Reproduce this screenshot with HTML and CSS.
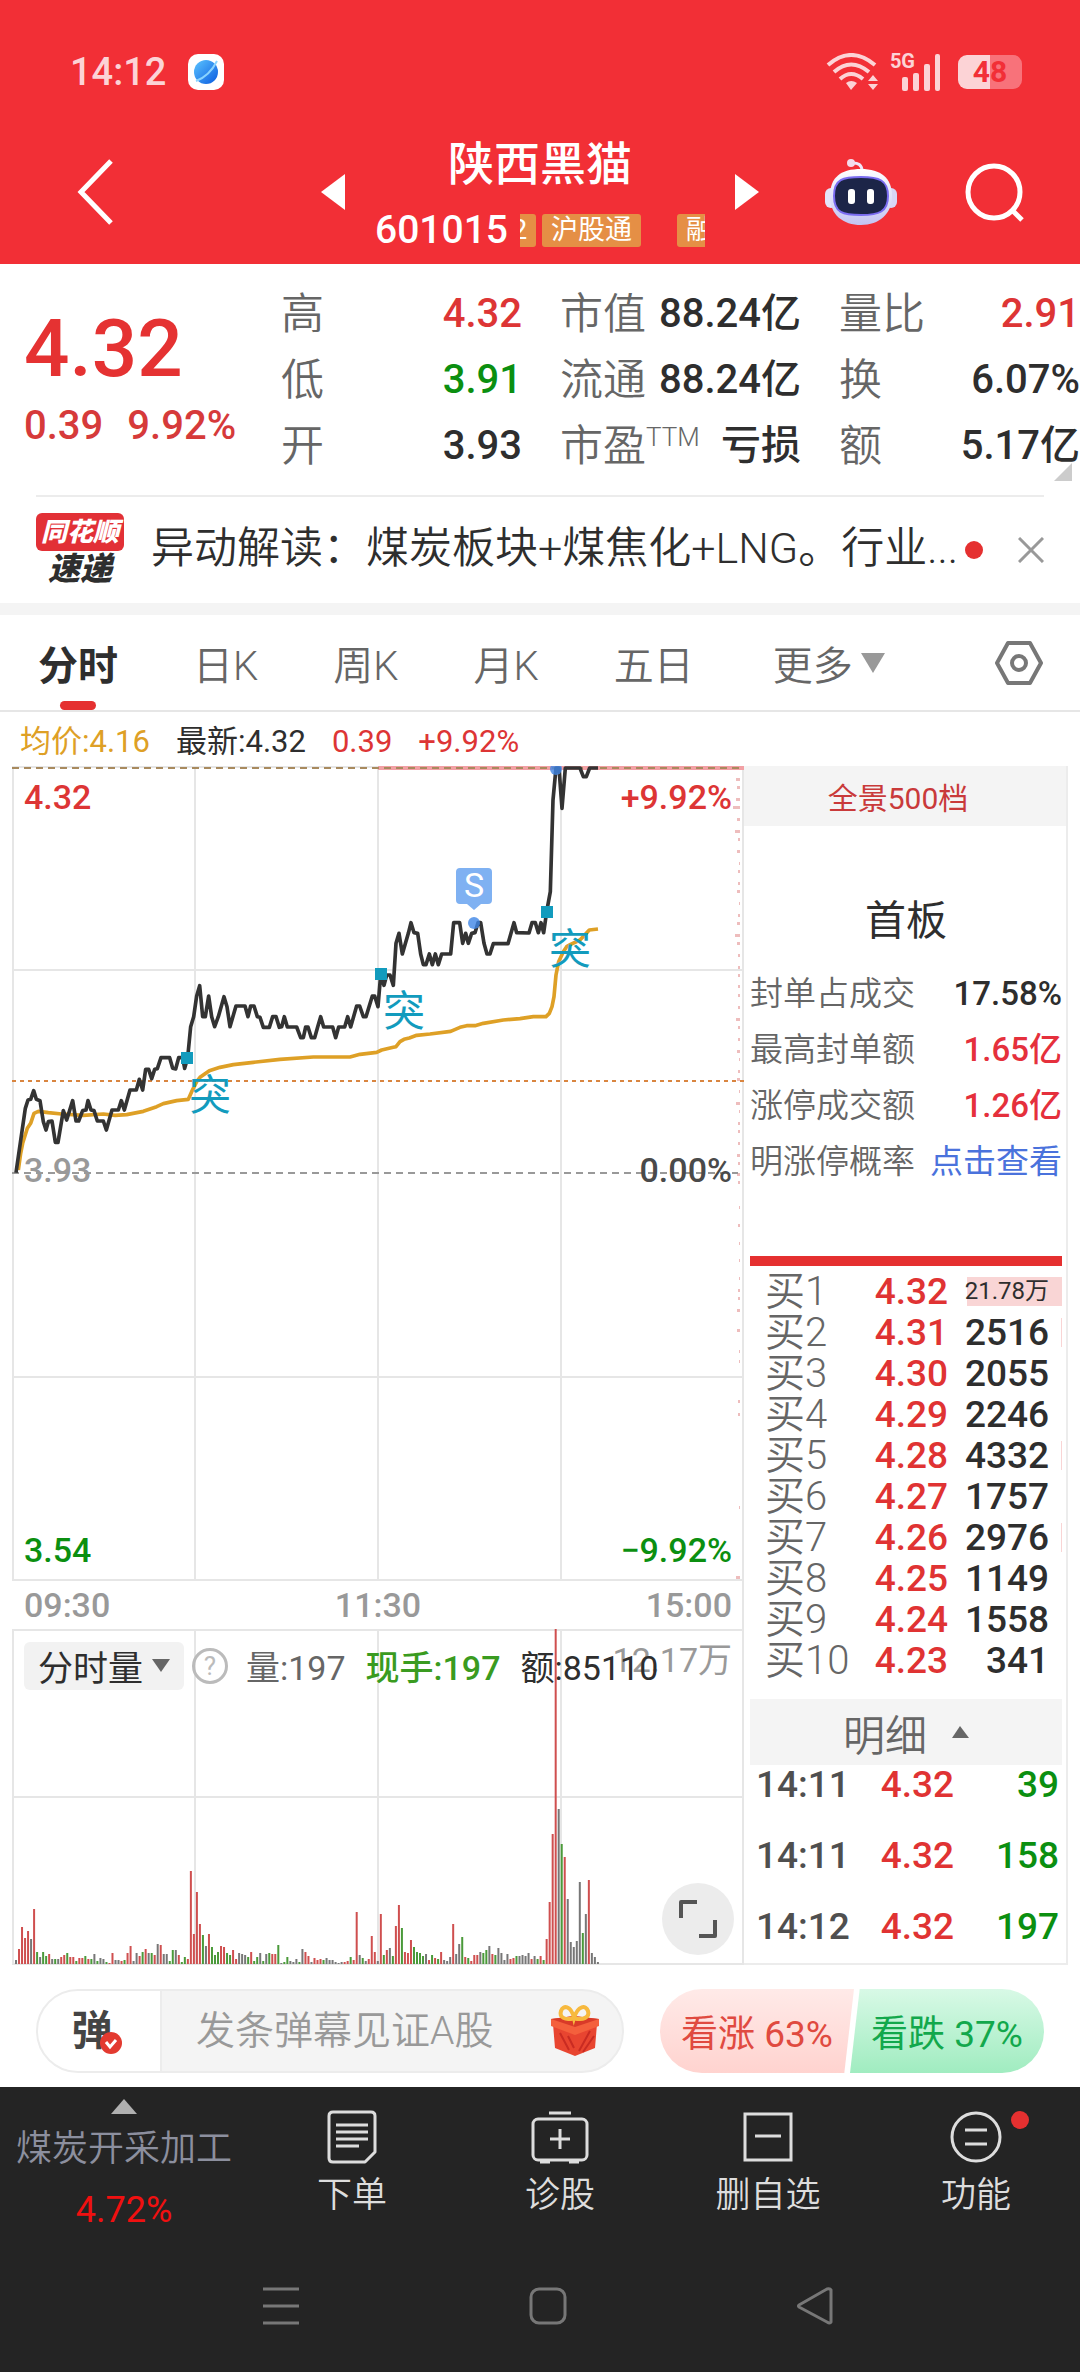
FILE: index.html
```html
<!DOCTYPE html>
<html lang="zh-CN">
<head>
<meta charset="utf-8">
<meta name="viewport" content="width=device-width, initial-scale=1">
<title>陕西黑猫 601015</title>
<link rel="stylesheet" href="styles.css">
</head>
<body>
<header class="top">
  <div class="status">
    <span class="clock">14:12</span>
    <svg class="status-app" width="36" height="36" viewBox="0 0 36 36"><defs><linearGradient id="app" x1="0" y1="0" x2="1" y2="1"><stop offset="0" stop-color="#5cc4ff"/><stop offset="1" stop-color="#0a5be0"/></linearGradient></defs><rect width="36" height="36" rx="10" fill="#fff"/><circle cx="18" cy="18" r="12" fill="url(#app)"/><path d="M8 27c8-3 16-10 21-20" stroke="#8ad4ff" stroke-width="2" fill="none"/></svg>
    <span class="spacer"></span>
    <svg width="52" height="38" viewBox="0 0 52 38" fill="none" stroke="#fcd3d6" stroke-width="4"><path d="M2 12Q25-8 49 12M8 19Q25 4 43 19M14 26Q25 16 37 26"/><path d="M20 30q5-4 11 0l-6 7z" fill="#fcd3d6" stroke="none"/><path d="M42 28l5-6 5 6zM42 31h10l-5 6z" fill="#fcd3d6" stroke="none"/></svg>
    <div class="signal"><span class="net">5G</span><svg width="40" height="38" viewBox="0 0 40 38" fill="#fcd3d6"><rect x="1" y="24" width="6" height="14" rx="2"/><rect x="12" y="20" width="6" height="18" rx="2"/><rect x="23" y="11" width="6" height="27" rx="2"/><rect x="34" y="1" width="5" height="37" rx="2"/></svg></div>
    <span class="battery">48</span>
  </div>
  <nav class="titlebar">
    <div class="side"><button class="icon-btn" aria-label="返回"><svg width="36" height="66" viewBox="0 0 36 66" fill="none" stroke="#fff" stroke-width="5"><path d="M34 2L4 33l30 31"/></svg></button></div>
    <button class="icon-btn" aria-label="上一只"><svg width="24" height="36" viewBox="0 0 24 36"><path d="M24 0v36L0 18z" fill="#fff"/></svg></button>
    <div class="stock">
      <h1>陕西黑猫</h1>
      <div class="stock-sub"><span class="code">601015</span><div class="tags"><span>2</span><span>沪股通</span><span class="far">融</span></div></div>
    </div>
    <button class="icon-btn" aria-label="下一只"><svg width="24" height="36" viewBox="0 0 24 36"><path d="M0 0v36l24-18z" fill="#fff"/></svg></button>
    <div class="side end">
      <button class="icon-btn" aria-label="智能助手"><svg width="72" height="68" viewBox="0 0 72 68"><defs><linearGradient id="bot" x1="0" y1="0" x2="0" y2="1"><stop offset="0" stop-color="#fff"/><stop offset="1" stop-color="#c3c4f2"/></linearGradient></defs><path d="M26 5q11-1 11 8" fill="none" stroke="#f0e8fb" stroke-width="3"/><circle cx="26" cy="5" r="4" fill="#f4dcec"/><rect x="0" y="30" width="12" height="20" rx="6" fill="#e4e4fa"/><rect x="60" y="30" width="12" height="20" rx="6" fill="#d8d6f6"/><path d="M36 11C56 11 67 20 67 38S54 67 36 67 5 57 5 38s11-27 31-27z" fill="url(#bot)"/><path d="M36 19c18 0 27 3 27 19s-9 19-27 19S9 55 9 38s9-19 27-19z" fill="#1c2548" stroke="#7a6cf0" stroke-width="2"/><rect x="23" y="31" width="7" height="15" rx="3" fill="#fff"/><rect x="42" y="31" width="7" height="15" rx="3" fill="#fff"/></svg></button>
      <button class="icon-btn" aria-label="搜索"><svg width="60" height="60" viewBox="0 0 60 60" fill="none" stroke="#fff" stroke-width="5"><circle cx="29" cy="30" r="26"/><path d="M47 48l10 10"/></svg></button>
    </div>
  </nav>
</header>

<main>
<section class="quote">
  <div class="price"><strong>4.32</strong><p><span>0.39</span><span>9.92%</span></p></div>
  <dl class="facts">
    <div><dt>高</dt><dd class="up">4.32</dd></div>
    <div><dt>市值</dt><dd>88.24亿</dd></div>
    <div><dt>量比</dt><dd class="up">2.91</dd></div>
    <div><dt>低</dt><dd class="down">3.91</dd></div>
    <div><dt>流通</dt><dd>88.24亿</dd></div>
    <div><dt>换</dt><dd>6.07%</dd></div>
    <div><dt>开</dt><dd>3.93</dd></div>
    <div><dt>市盈<sup>TTM</sup></dt><dd>亏损</dd></div>
    <div><dt>额</dt><dd>5.17亿</dd></div>
  </dl>
  <i class="corner"></i>
</section>

<section class="news">
  <div class="news-logo"><b>同花顺</b><em>速递</em></div>
  <a href="#news">异动解读：煤炭板块+煤焦化+LNG。行业...</a>
  <i class="dot"></i>
  <button class="icon-btn" aria-label="关闭"><svg width="26" height="26" viewBox="0 0 26 26" stroke="#999" stroke-width="3"><path d="M1 1l24 24M25 1L1 25"/></svg></button>
</section>

<nav class="tabs">
  <button class="active">分时</button><button>日K</button><button>周K</button><button>月K</button><button>五日</button>
  <button class="more">更多<svg width="24" height="20" viewBox="0 0 24 20"><path d="M0 0h24L12 20z" fill="#999"/></svg></button>
  <button class="icon-btn settings" aria-label="设置"><svg width="50" height="46" viewBox="0 0 50 46" fill="none" stroke="#777" stroke-width="4" stroke-linejoin="round"><path d="M14 3h22l11 20-11 20H14L3 23z"/><circle cx="25" cy="23" r="7"/></svg></button>
</nav>

<p class="legend"><span class="avg">均价:4.16</span><span>最新:4.32</span><span class="up">0.39</span><span class="up">+9.92%</span></p>

<section class="board">
  <div class="charts">
    <div class="plot">
      <svg viewBox="0 0 732 816" id="price-chart">
        <g stroke="#e6e6e6" stroke-width="2" fill="none"><path d="M1 0V815M183 0V815M366 0V815M549 0V815M0 1H732M0 204H732M0 611H732M0 814H732"/></g>
        <g id="ticks" fill="#eebdbd"></g>
        <path d="M366 2H732" stroke="#f2a0a4" stroke-width="4"/>
        <path d="M0 2H732" stroke="#a88a5e" stroke-width="2" stroke-dasharray="7 5"/>
        <path d="M0 315H732" stroke="#d98540" stroke-width="2" stroke-dasharray="4 4"/>
        <path d="M0 407H726" stroke="#999" stroke-width="2" stroke-dasharray="7 5"/>
        <g transform="translate(-12 -6) scale(.33333)" fill="none" stroke-width="11" stroke-linejoin="round">
          <polyline id="avg-line" stroke="#dea026"/>
          <polyline id="price-line" stroke="#333"/>
        </g>
        <g fill="#129bbd"><rect x="169" y="286" width="12" height="12"/><rect x="363" y="202" width="12" height="12"/><rect x="529" y="140" width="12" height="12"/></g>
        <g class="mark"><text x="177" y="344">突</text><text x="371" y="260">突</text><text x="537" y="198">突</text></g>
        <g fill="#3f86e6"><circle cx="462" cy="157" r="6" opacity=".8"/><circle cx="544" cy="3" r="6" opacity=".8"/></g>
        <path d="M448 102h28q4 0 4 4v28q0 4-4 4h-7l-7 6-7-6h-7q-4 0-4-4v-28q0-4 4-4z" fill="#7fb1f2"/>
        <text class="sell" x="462" y="131">S</text>
      </svg>
      <span class="lbl tl up">4.32</span><span class="lbl tr up">+9.92%</span>
      <span class="lbl ml">3.93</span><span class="lbl mr">0.00%</span>
      <span class="lbl bl down">3.54</span><span class="lbl br down">−9.92%</span>
    </div>
    <div class="times"><span>09:30</span><span>11:30</span><span>15:00</span></div>
    <div class="plot">
      <svg viewBox="0 0 732 336">
        <g stroke="#e6e6e6" stroke-width="2" fill="none"><path d="M1 0V335M183 0V335M366 0V335M549 0V335M0 1H732M0 168H732M0 335H732"/></g>
        <g id="volume"></g>
      </svg>
      <span class="lbl vmax">12.17万</span>
      <div class="vol-head">
        <button class="chip">分时量<svg width="18" height="13" viewBox="0 0 18 13"><path d="M0 0h18l-9 13z" fill="#666"/></svg></button>
        <span class="help">?</span>
        <span class="grey">量:197</span><span class="now">现手:197</span><span>额:85110</span>
      </div>
      <button class="full" aria-label="全屏"><svg width="38" height="38" viewBox="0 0 38 38" fill="none" stroke="#555" stroke-width="4" stroke-linejoin="round"><path d="M2 18V2h16M36 20v16H20"/></svg></button>
    </div>
  </div>

  <aside class="depth">
    <button class="full-depth">全景500档</button>
    <div class="limit">
      <h2>首板</h2>
      <dl>
        <div><dt>封单占成交</dt><dd>17.58%</dd></div>
        <div><dt>最高封单额</dt><dd class="hot">1.65亿</dd></div>
        <div><dt>涨停成交额</dt><dd class="hot">1.26亿</dd></div>
        <div><dt>明涨停概率</dt><dd><a href="#rate">点击查看</a></dd></div>
      </dl>
    </div>
    <table class="bids">
      <tr><th>买1</th><td>4.32</td><td class="big">21.78万</td></tr>
      <tr><th>买2</th><td>4.31</td><td class="sliver">2516</td></tr>
      <tr><th>买3</th><td>4.30</td><td>2055</td></tr>
      <tr><th>买4</th><td>4.29</td><td>2246</td></tr>
      <tr><th>买5</th><td>4.28</td><td class="sliver">4332</td></tr>
      <tr><th>买6</th><td>4.27</td><td>1757</td></tr>
      <tr><th>买7</th><td>4.26</td><td class="sliver">2976</td></tr>
      <tr><th>买8</th><td>4.25</td><td>1149</td></tr>
      <tr><th>买9</th><td>4.24</td><td>1558</td></tr>
      <tr><th>买10</th><td>4.23</td><td>341</td></tr>
    </table>
    <button class="detail">明细<svg width="17" height="12" viewBox="0 0 17 12"><path d="M0 12h17L8 0z" fill="#666"/></svg></button>
    <table class="deals">
      <tr><th>14:11</th><td>4.32</td><td>39</td></tr>
      <tr><th>14:11</th><td>4.32</td><td>158</td></tr>
      <tr><th>14:12</th><td>4.32</td><td>197</td></tr>
    </table>
  </aside>
</section>

<section class="chat">
  <div class="composer">
    <button class="danmu" aria-label="弹幕开关">弹<svg width="22" height="22" viewBox="0 0 22 22"><circle cx="11" cy="11" r="11" fill="#e33a30"/><path d="M6 10l4 5 6-7" fill="none" stroke="#fff" stroke-width="3"/></svg></button>
    <input type="text" placeholder="发条弹幕见证A股" aria-label="发条弹幕">
    <svg class="gift" width="50" height="54" viewBox="0 0 50 54"><path d="M3 20l22 10v22L5 44zM47 20L25 30v22l20-8z" fill="#e84530"/><path d="M1 15l23-3 25 3v7L25 31 1 22z" fill="#f4603c"/><path d="M1 15l23-3 25 3-24 8z" fill="#d93a28"/><path d="M10 29l9 17M18 32l6 12M40 27L29 47M44 32L33 48" stroke="#c92b22" stroke-width="2"/><path d="M24 14C15 17 9 13 11 7s10-6 13 7c4-13 12-13 14-7s-5 10-14 7z" fill="none" stroke="#f7b93e" stroke-width="4"/></svg>
  </div>
  <div class="poll"><button class="bull">看涨 63%</button><button class="bear">看跌 37%</button></div>
</section>
</main>

<footer class="bottom">
  <div class="menu">
    <a href="#sector" class="sector"><svg width="26" height="15" viewBox="0 0 26 15"><path d="M0 15h26L13 0z" fill="#b0b0b0"/></svg><span>煤炭开采加工</span><b>4.72%</b></a>
    <a href="#order"><svg width="54" height="54" viewBox="0 0 54 54" fill="none" stroke="#ddd" stroke-width="3"><path d="M8 2h38q4 0 4 4v36l-10 10H8q-4 0-4-4V6q0-4 4-4z" stroke-linejoin="round"/><path d="M11 15h32M11 22h32M11 29h32M11 36h23"/></svg><span>下单</span></a>
    <a href="#diagnose"><svg width="58" height="54" viewBox="0 0 58 54" fill="none" stroke="#ddd" stroke-width="3"><rect x="2" y="9" width="54" height="41" rx="5"/><path d="M18 3h22M9 52h10M38 52h10M29 19v20M19 29h20"/></svg><span>诊股</span></a>
    <a href="#remove"><svg width="54" height="54" viewBox="0 0 54 54" fill="none" stroke="#ddd" stroke-width="3"><rect x="4" y="4" width="46" height="46"/><path d="M14 26h26"/></svg><span>删自选</span></a>
    <a href="#more" class="has-dot"><svg width="54" height="54" viewBox="0 0 54 54" fill="none" stroke="#ddd" stroke-width="3"><circle cx="27" cy="27" r="24"/><path d="M16 20h22M16 34h22"/></svg><span>功能</span></a>
  </div>
  <div class="sysnav">
    <button class="icon-btn" aria-label="最近任务"><svg width="36" height="38" viewBox="0 0 36 38" stroke="#777" stroke-width="3"><path d="M0 2h36M0 19h36M0 36h36"/></svg></button>
    <button class="icon-btn" aria-label="主屏幕"><svg width="38" height="38" viewBox="0 0 38 38" fill="none" stroke="#777" stroke-width="3"><rect x="2" y="2" width="34" height="34" rx="8"/></svg></button>
    <button class="icon-btn" aria-label="后退"><svg width="38" height="38" viewBox="0 0 38 38" fill="none" stroke="#777" stroke-width="3" stroke-linejoin="round"><path d="M35 3v32q-1 2-4 0L3 20q-1-1 0-2L31 2q3-1 4 1z"/></svg></button>
  </div>
</footer>
<script src="script.js"></script>
</body>
</html>
```
FILE: styles.css
```css
* { box-sizing: border-box; }
body {
  margin: 0;
  background: #fff;
  color: #2e2e2e;
  font-family: Roboto, "Noto Sans CJK SC", sans-serif;
  font-size: 34px;
}
h1, h2, p, dl, dd { margin: 0; }
button {
  padding: 0;
  border: 0;
  background: none;
  color: inherit;
  font: inherit;
}
a { color: inherit; text-decoration: none; }
svg { display: block; flex: none; }
table { border-collapse: collapse; }
th, td { padding: 0; }
.icon-btn { flex: none; }
.up { color: #dd3535; }
.down { color: #0b8f10; }
.spacer { flex: 1; }

/* header */
.top { background: #f22f36; color: #fff; }
.status {
  display: flex;
  align-items: center;
  height: 132px;
  padding: 12px 58px 0 70px;
}
.clock { font-size: 38px; font-weight: 500; color: #fcd3d6; }
.status-app { margin-left: 22px; }
.signal { display: flex; align-items: flex-start; margin: 0 17px 0 12px; }
.net { margin-right: -14px; font-size: 20px; line-height: 16px; font-weight: 700; color: #fcd3d6; }
.battery {
  width: 64px;
  height: 34px;
  border-radius: 9px;
  background: linear-gradient(90deg, #fcd3d6 50%, #f8727a 50%);
  color: #f22f36;
  font-size: 30px;
  font-weight: 700;
  line-height: 34px;
  text-align: center;
}
.titlebar {
  display: flex;
  align-items: center;
  height: 132px;
  padding: 0 55px 12px 77px;
}
.side { display: flex; flex: 1 1 0; margin-right: -22px; }
.side.end { justify-content: flex-end; gap: 68px; margin: 0; }
.stock { width: 390px; padding-top: 6px; text-align: center; }
.stock h1 { font-size: 46px; font-weight: 500; line-height: 64px; }
.stock-sub { display: flex; align-items: center; gap: 12px; height: 56px; margin-top: 6px; padding: 0 30px; }
.code { font-size: 39px; font-weight: 500; }
.tags {
  display: flex;
  justify-content: center;
  flex: 1;
  gap: 6px;
  min-width: 0;
  overflow: hidden;
}
.tags span {
  flex: none;
  padding: 0 9px;
  border-radius: 3px;
  background: #e58f45;
  font-size: 27px;
  line-height: 33px;
}
.tags .far { margin-left: 30px; }

/* quote */
.quote {
  position: relative;
  display: flex;
  height: 231px;
  padding-top: 17px;
}
.price { width: 281px; padding: 22px 0 0 24px; color: #e53232; }
.price strong { display: block; font-size: 80px; font-weight: 500; line-height: 92px; }
.price p { display: flex; gap: 24px; font-size: 40px; line-height: 62px; color: #d63a3a; font-weight: 500; }
.facts {
  display: grid;
  flex: 1;
  grid-template-columns: repeat(3, 1fr);
  column-gap: 38px;
  height: 198px;
}
.facts div { display: flex; justify-content: space-between; align-items: center; white-space: nowrap; line-height: 66px; }
.facts dt { font-size: 43px; color: #666; font-weight: 350; }
.facts dd { font-size: 40px; font-weight: 500; }
.facts sup { font-size: 26px; line-height: 0; }
.corner {
  position: absolute;
  right: 8px;
  bottom: 14px;
  border-left: 18px solid transparent;
  border-bottom: 18px solid #ccc;
}

/* news */
.news {
  display: flex;
  align-items: center;
  height: 108px;
  margin: 0 36px;
  border-top: 2px solid #ececec;
}
.news a { flex: 1; margin-left: 27px; font-size: 43px; line-height: 60px; white-space: nowrap; font-weight: 350; padding-bottom: 4px; }
.news-logo { width: 88px; text-align: center; font-style: italic; font-weight: 900; }
.news-logo b {
  display: block;
  border-radius: 6px;
  background: #e23036;
  color: #fff;
  font-size: 26px;
  font-weight: 900;
  line-height: 38px;
}
.news-logo em { display: block; font-size: 32px; line-height: 36px; }
.dot { width: 18px; height: 18px; margin: 0 35px 0 6px; border-radius: 50%; background: #e53030; }

/* tabs */
.tabs {
  display: flex;
  gap: 75px;
  align-items: center;
  height: 109px;
  padding: 0 36px 0 38px;
  border-top: 12px solid #f4f4f4;
  border-bottom: 2px solid #e6e6e6;
  color: #666;
  font-size: 40px;
}
.tabs button { position: relative; height: 94px; white-space: nowrap; font-weight: 350; }
.tabs .active { color: #2e2e2e; font-weight: 700; }
.active::after {
  content: "";
  position: absolute;
  left: 50%;
  bottom: 0;
  width: 36px;
  height: 9px;
  margin-left: -18px;
  border-radius: 5px;
  background: #e53030;
}
.tabs .more { display: flex; align-items: center; gap: 8px; margin-left: 4px; }
.tabs .settings { margin-left: auto; }
.legend {
  display: flex;
  gap: 26px;
  height: 54px;
  padding: 0 20px;
  font-size: 31px;
  line-height: 60px;
}
.legend .avg { color: #dea026; }

/* chart board */
.board {
  display: grid;
  grid-template-columns: 732fr 324fr;
  padding: 0 12px;
}
.charts { box-shadow: inset -2px 0 #e6e6e6; }
.plot { position: relative; }
.plot > svg { width: 100%; height: auto; }
.mark text { fill: #129bbd; font-size: 42px; }
.sell { fill: #fff; font-size: 34px; text-anchor: middle; }
.lbl { position: absolute; line-height: 40px; font-weight: 500; }
.tl, .ml, .bl { left: 12px; }
.tr, .mr, .br, .vmax { right: 12px; }
.tl, .tr { top: 11px; }
.ml, .mr { top: 47%; }
.bl, .br { bottom: 12px; }
.ml, .vmax { color: #999; }
.mr { color: #4a4a4a; }
.vmax { top: 11px; font-weight: 400; }
.times { display: flex; justify-content: space-between; padding: 0 12px; line-height: 47px; color: #999; font-weight: 500; }
.vol-head {
  position: absolute;
  top: 12px;
  left: 12px;
  display: flex;
  align-items: center;
  white-space: nowrap;
}
.vol-head > * { margin-right: 20px; }
.vol-head .chip {
  display: flex;
  align-items: center;
  gap: 9px;
  height: 48px;
  margin-right: 8px;
  padding: 0 14px;
  border-radius: 6px;
  background: #f2f2f2;
  font-size: 35px;
}
.vol-head .help {
  width: 36px;
  height: 36px;
  margin-right: 18px;
  border: 3px solid #bbb;
  border-radius: 50%;
  color: #bbb;
  font-size: 26px;
  line-height: 30px;
  text-align: center;
}
.grey { color: #666; }
.now { color: #3a9b20; font-weight: 500; }
.full {
  position: absolute;
  right: 10px;
  bottom: 10px;
  display: grid;
  place-items: center;
  width: 72px;
  height: 72px;
  border-radius: 50%;
  background: #ececec;
}

/* order depth */
.depth {
  display: flex;
  flex-direction: column;
  padding: 0 4px 0 6px;
  border-right: 2px solid #ececec;
  border-bottom: 2px solid #ececec;
}
.full-depth { height: 60px; margin: 0 -4px 0 -6px; padding-right: 14px; background: #f4f4f4; color: #c93a3a; font-size: 30px; }
.limit { height: 440px; border-bottom: 10px solid #e53030; }
.limit h2 { padding-top: 60px; font-size: 41px; font-weight: 400; line-height: 70px; text-align: center; }
.limit dl { padding-top: 10px; }
.limit dl div { display: flex; justify-content: space-between; line-height: 56px; font-size: 33px; }
.limit dt { color: #666; font-weight: 350; }
.limit dd { font-weight: 500; }
.limit .hot { color: #e5303c; }
.limit a { color: #4a72dc; font-weight: 400; }
.bids { width: 100%; margin: 5px 0 18px; font-size: 37px; }
.bids tr { height: 41px; line-height: 41px; }
.bids th { padding-left: 15px; color: #666; font-weight: 350; font-size: 40px; text-align: left; }
.bids td, .deals td { font-weight: 500; text-align: right; }
.bids td:nth-child(2), .deals td:nth-child(2) { width: 85px; color: #e03333; }
.bids td:last-child { width: 114px; padding-right: 13px; }
.bids .big { background: linear-gradient(#f9d5d5, #f9d5d5) right center / 95px 29px no-repeat; font-size: 24px; font-weight: 400; }
.bids .sliver { background: linear-gradient(#f9d5d5, #f9d5d5) right center / 1px 29px no-repeat; }
.detail {
  display: flex;
  align-items: center;
  justify-content: center;
  gap: 25px;
  height: 66px;
  background: #f4f4f4;
  color: #666;
  font-size: 42px;
  font-weight: 350;
}
.deals { width: 100%; margin-top: -16px; font-size: 37px; }
.deals tr { height: 71px; }
.deals th { padding-left: 6px; color: #4f4f4f; font-weight: 500; text-align: left; }
.deals td:last-child { width: 108px; padding-right: 3px; color: #0b8f10; }

/* chat and poll */
.chat {
  display: grid;
  grid-template-columns: 588fr 384fr;
  gap: 36px;
  padding: 24px 36px 14px;
}
.composer {
  display: flex;
  align-items: center;
  height: 84px;
  overflow: hidden;
  border: 2px solid #ececec;
  border-radius: 42px;
  background: #f4f4f4;
}
.danmu {
  position: relative;
  width: 124px;
  height: 84px;
  border-right: 2px solid #ececec;
  background: #fff;
  color: #444;
  font-size: 41px;
  font-weight: 700;
  padding: 0 14px 8px 0;
}
.danmu svg { position: absolute; left: 62px; bottom: 19px; }
.composer input {
  flex: 1;
  min-width: 0;
  padding: 0 0 0 34px;
  border: 0;
  background: none;
  font: inherit;
  font-size: 39px;
}
.composer input::placeholder { color: #999; font-weight: 350; }
.gift { margin-right: 22px; }
.poll { display: flex; height: 84px; border-radius: 42px; overflow: hidden; font-size: 37px; white-space: nowrap; }
.poll button { flex: 1; }
.bull { margin-right: -2px; background: linear-gradient(#ffeae8, #ffd3cf); clip-path: polygon(0 0, 100% 0, 95% 100%, 0 100%); color: #e04a40; }
.bear { margin-left: -2px; background: linear-gradient(#d8f9e6, #a0ecc0); clip-path: polygon(5% 0, 100% 0, 100% 100%, 0 100%); color: #12a84c; }

/* bottom bar */
.bottom { background: #242424; color: #ddd; }
.menu { display: grid; grid-template-columns: 248fr 208fr 208fr 208fr 208fr; height: 157px; }
.menu a { position: relative; display: flex; flex-direction: column; align-items: center; padding-top: 23px; font-size: 35px; font-weight: 350; line-height: 52px; white-space: nowrap; }
.menu a svg { margin-bottom: 6px; }
.menu .sector { padding-top: 12px; font-size: 36px; color: #8c8f9e; line-height: 61px; }
.menu .sector svg { margin-bottom: 5px; }
.sector b { color: #f01010; font-weight: 400; }
.has-dot::after { content: ""; position: absolute; left: 67%; top: 24px; width: 18px; height: 18px; border-radius: 50%; background: #e53030; }
.sysnav { display: flex; justify-content: space-between; padding: 43px 246px 47px 263px; }
```
FILE: script.js
```js
const price = `48,1238 76,1045 84,1020 92,1018 101,992 109,1018 120,1022 130,1085 138,1110 145,1085 156,1083 166,1147 174,1147 190,1052 200,1080 218,1022 228,1083 236,1083 248,1052 258,1050 264,1022 273,1050 282,1052 292,1083 310,1083 319,1110 336,1050 355,1050 364,1022 373,1050 390,990 409,990 418,958 428,990 437,928 446,928 455,956 464,928 472,926 483,893 509,893 518,925 527,927 536,893 548,893 554,925 563,893 572,800 581,770 590,708 599,677 608,770 616,770 626,708 635,770 644,800 655,770 672,710 681,740 690,800 708,738 735,738 744,770 752,738 762,738 772,770 780,772 790,802 808,802 818,770 828,770 838,802 845,800 853,770 862,801 890,801 902,833 910,833 917,801 924,801 934,833 944,833 953,801 962,770 971,801 998,801 1007,833 1016,801 1034,801 1043,770 1052,801 1070,738 1079,738 1090,770 1098,770 1117,708 1124,708 1134,740 1142,645 1152,676 1160,645 1170,645 1180,676 1188,550 1197,520 1207,582 1225,520 1233,488 1242,518 1253,520 1262,582 1270,614 1278,614 1288,582 1297,614 1306,582 1315,614 1325,582 1352,582 1361,488 1379,488 1388,550 1397,520 1405,550 1415,520 1425,518 1434,488 1442,488 1452,550 1461,582 1470,582 1480,551 1524,551 1533,520 1542,488 1550,518 1587,519 1596,488 1606,488 1615,518 1623,488 1631,518 1640,455 1651,395 1659,120 1668,24 1677,24 1686,145 1696,24 1740,24 1750,50 1759,50 1769,24 1794,24`;
const average = `55,1230 62,1180 68,1150 82,1105 92,1090 102,1060 115,1054 145,1058 185,1062 250,1066 310,1062 345,1066 380,1064 430,1054 470,1040 490,1031 530,1022 565,1018 575,995 590,965 600,952 628,932 660,922 700,914 760,907 840,898 940,891 1050,891 1080,883 1130,877 1145,870 1180,862 1188,860 1200,845 1212,838 1228,834 1250,826 1290,822 1352,814 1380,802 1400,797 1425,797 1450,790 1510,780 1560,776 1600,770 1638,770 1648,760 1656,740 1662,710 1668,645 1676,605 1690,575 1700,560 1712,553 1740,540 1768,510 1794,507`;
document.getElementById("price-line").setAttribute("points", price);
document.getElementById("avg-line").setAttribute("points", average);

// one bar per minute: r rise, g fall, k flat
const volume = "k4 r15 r37 r26 r33 k25 r55 g12 k7 g12 g8 r10 k5 g5 k5 r7 r9 g11 r7 r7 g3 r6 r6 g8 r5 g5 k10 g3 k6 k5 g2 r1 r11 k4 k4 r3 g4 r11 r18 k3 k11 r8 g12 r15 k11 g11 r9 k20 r19 k10 k10 g3 g14 k14 r9 g2 g7 r5 r93 r30 r72 r40 g29 k18 r30 g17 g9 g12 r18 r17 g11 g9 r14 r5 k11 k10 k9 g7 r12 g3 g7 k11 g3 k10 g11 r10 r10 g19 k1 g2 g7 k3 k2 k5 g2 k15 r12 r8 k2 r6 r4 r5 g4 k6 k4 k4 k2 k1 k2 r2 r3 g7 r4 r52 k9 g6 k3 r5 r28 r12 k3 r50 g9 r14 k16 g8 r38 r59 g36 r12 r11 r24 g17 g12 g11 g8 k10 r4 g9 r6 g5 r12 k4 k3 k7 r40 k10 k20 g27 r7 g6 r3 r9 r9 k12 g11 g14 k18 r10 g9 k16 k11 k4 k10 r5 r6 g8 k8 k9 k8 k11 r5 k8 g5 r8 g4 r25 r62 r130 r336 k155 g120 r107 k65 k22 k17 k23 k82 g31 k50 r84 k11 k7 k2";
const colors = { r: "#cf4f4f", g: "#4a9a3a", k: "#777" };
const svgNS = "http://www.w3.org/2000/svg";
function bar(parent, x, y, width, height, fill) {
  const rect = document.createElementNS(svgNS, "rect");
  Object.entries({ x, y, width, height }).forEach(([k, v]) => rect.setAttribute(k, v));
  if (fill) rect.setAttribute("fill", fill);
  parent.appendChild(rect);
}
const volumeGroup = document.getElementById("volume");
volume.split(" ").forEach((item, i) => {
  const height = Number(item.slice(1));
  bar(volumeGroup, 3 + i * 3.015, 335 - height, 2, height, colors[item[0]]);
});

// traded size at each price level, drawn from the right edge
const levels = [[12,4],[20,3],[32,4],[40,7],[52,3],[64,5],[72,2],[84,3],[96,1],[104,2],[116,2],[124,3],[136,1],[148,2],[156,3],[168,5],[176,3],[188,2],[200,2],[208,2],[219,2],[228,2],[240,2],[252,4],[260,2],[272,2],[284,3],[292,1],[304,2],[312,3],[324,1],[336,4],[344,1],[356,2],[364,2],[376,2],[388,3],[396,2],[407,3],[415,2],[440,1],[458,2],[476,1],[493,1],[511,1],[523,2],[531,2],[543,3],[563,3],[584,1],[594,1],[634,2],[647,2],[740,1],[810,4]];
const ticks = document.getElementById("ticks");
levels.forEach(([y, w]) => bar(ticks, 728 - w, y, w, 3));
```
